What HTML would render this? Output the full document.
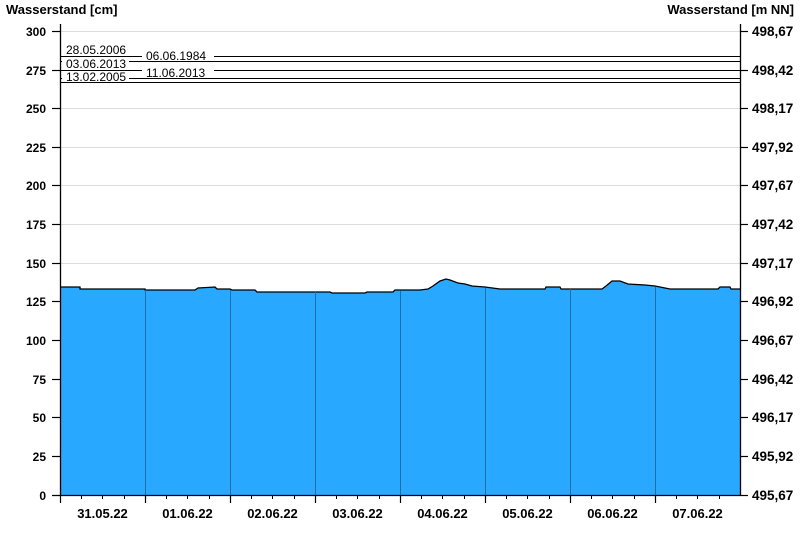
<!DOCTYPE html>
<html><head><meta charset="utf-8"><style>
html,body{margin:0;padding:0;background:#fff;}
svg{display:block;font-family:"Liberation Sans",Arial,sans-serif;}
.b{font-weight:bold;font-size:12px;fill:#000;}
.t{font-weight:bold;font-size:13px;fill:#000;}
.r{font-weight:bold;font-size:13.5px;fill:#000;}
.s{font-size:12px;fill:#000;}
</style></head><body>
<svg width="800" height="550" viewBox="0 0 800 550" xmlns="http://www.w3.org/2000/svg">
<rect width="800" height="550" fill="#fff"/>
<text x="6" y="14" class="t">Wasserstand [cm]</text>
<text x="794" y="14" class="t" text-anchor="end">Wasserstand [m NN]</text>
<g stroke="#dcdcdc" stroke-width="1">
<line x1="60" x2="740" y1="31.5" y2="31.5"/>
<line x1="60" x2="740" y1="108.5" y2="108.5"/>
<line x1="60" x2="740" y1="147.5" y2="147.5"/>
<line x1="60" x2="740" y1="185.5" y2="185.5"/>
<line x1="60" x2="740" y1="224.5" y2="224.5"/>
<line x1="60" x2="740" y1="263.5" y2="263.5"/>
</g>
<polygon fill="#29a8ff" stroke="none" points="60,495 60,287 80,287 80,289 145,289 145,290 195,290 198,288 215,287 217,289 230,289 232,290 255,290 257,292 330,292 332,293 365,293 367,292 393,292 395,290 420,290 428,289 433,286 440,281 446,279 450,280 458,283 465,284 472,286 485,287 500,289 545,289 546,287 560,287 561,289 602,289 606,286 612,281 620,281 628,284 645,285 655,286 670,289 718,289 720,287 730,287 731,289 740,289 740,495"/>
<polyline fill="none" stroke="#000" stroke-width="1.3" points="60,287 80,287 80,289 145,289 145,290 195,290 198,288 215,287 217,289 230,289 232,290 255,290 257,292 330,292 332,293 365,293 367,292 393,292 395,290 420,290 428,289 433,286 440,281 446,279 450,280 458,283 465,284 472,286 485,287 500,289 545,289 546,287 560,287 561,289 602,289 606,286 612,281 620,281 628,284 645,285 655,286 670,289 718,289 720,287 730,287 731,289 740,289"/>
<g stroke="#1d6fa8" stroke-width="1">
<line x1="145.5" x2="145.5" y1="290" y2="495"/>
<line x1="230.5" x2="230.5" y1="290" y2="495"/>
<line x1="315.5" x2="315.5" y1="292" y2="495"/>
<line x1="400.5" x2="400.5" y1="291" y2="495"/>
<line x1="485.5" x2="485.5" y1="288" y2="495"/>
<line x1="570.5" x2="570.5" y1="289" y2="495"/>
<line x1="655.5" x2="655.5" y1="287" y2="495"/>
</g>
<g stroke="#000" stroke-width="1">
<line x1="60" x2="740" y1="56.5" y2="56.5"/>
<line x1="60" x2="740" y1="61.5" y2="61.5"/>
<line x1="60" x2="740" y1="70.5" y2="70.5"/>
<line x1="60" x2="740" y1="78.5" y2="78.5"/>
<line x1="60" x2="740" y1="82.5" y2="82.5"/>
</g>
<rect x="62" y="43" width="67" height="13" fill="#fff"/>
<text x="66" y="54" class="s">28.05.2006</text>
<rect x="142" y="48" width="72" height="13" fill="#fff"/>
<text x="146" y="60" class="s">06.06.1984</text>
<rect x="62" y="57.5" width="67" height="12.5" fill="#fff"/>
<text x="66" y="68" class="s">03.06.2013</text>
<rect x="142" y="65" width="72" height="13" fill="#fff"/>
<text x="146" y="77" class="s">11.06.2013</text>
<rect x="62" y="71.5" width="67" height="10.5" fill="#fff"/>
<text x="66" y="81" class="s">13.02.2005</text>
<g stroke="#000" stroke-width="1.3" fill="none">
<line x1="60.5" x2="60.5" y1="24" y2="495"/>
<line x1="740.5" x2="740.5" y1="24" y2="495"/>
<line x1="52" x2="740" y1="495.5" y2="495.5"/>
</g>
<g stroke="#000" stroke-width="1.2">
<line x1="52" x2="60" y1="31.5" y2="31.5"/><line x1="52" x2="60" y1="70.5" y2="70.5"/><line x1="52" x2="60" y1="108.5" y2="108.5"/><line x1="52" x2="60" y1="147.5" y2="147.5"/><line x1="52" x2="60" y1="185.5" y2="185.5"/><line x1="52" x2="60" y1="224.5" y2="224.5"/><line x1="52" x2="60" y1="263.5" y2="263.5"/><line x1="52" x2="60" y1="301.5" y2="301.5"/><line x1="52" x2="60" y1="340.5" y2="340.5"/><line x1="52" x2="60" y1="379.5" y2="379.5"/><line x1="52" x2="60" y1="417.5" y2="417.5"/><line x1="52" x2="60" y1="456.5" y2="456.5"/>
<line x1="740" x2="748" y1="31.5" y2="31.5"/><line x1="740" x2="748" y1="70.5" y2="70.5"/><line x1="740" x2="748" y1="108.5" y2="108.5"/><line x1="740" x2="748" y1="147.5" y2="147.5"/><line x1="740" x2="748" y1="185.5" y2="185.5"/><line x1="740" x2="748" y1="224.5" y2="224.5"/><line x1="740" x2="748" y1="263.5" y2="263.5"/><line x1="740" x2="748" y1="301.5" y2="301.5"/><line x1="740" x2="748" y1="340.5" y2="340.5"/><line x1="740" x2="748" y1="379.5" y2="379.5"/><line x1="740" x2="748" y1="417.5" y2="417.5"/><line x1="740" x2="748" y1="456.5" y2="456.5"/><line x1="740" x2="748" y1="495.5" y2="495.5"/>
<line x1="60.5" x2="60.5" y1="495" y2="503"/><line x1="145.5" x2="145.5" y1="495" y2="503"/><line x1="230.5" x2="230.5" y1="495" y2="503"/><line x1="315.5" x2="315.5" y1="495" y2="503"/><line x1="400.5" x2="400.5" y1="495" y2="503"/><line x1="485.5" x2="485.5" y1="495" y2="503"/><line x1="570.5" x2="570.5" y1="495" y2="503"/><line x1="655.5" x2="655.5" y1="495" y2="503"/>
</g>
<g stroke="#000" stroke-width="1">
<line x1="81.5" x2="81.5" y1="495" y2="499"/><line x1="102.5" x2="102.5" y1="495" y2="499"/><line x1="124.5" x2="124.5" y1="495" y2="499"/>
<line x1="166.5" x2="166.5" y1="495" y2="499"/><line x1="187.5" x2="187.5" y1="495" y2="499"/><line x1="209.5" x2="209.5" y1="495" y2="499"/>
<line x1="251.5" x2="251.5" y1="495" y2="499"/><line x1="272.5" x2="272.5" y1="495" y2="499"/><line x1="294.5" x2="294.5" y1="495" y2="499"/>
<line x1="336.5" x2="336.5" y1="495" y2="499"/><line x1="357.5" x2="357.5" y1="495" y2="499"/><line x1="379.5" x2="379.5" y1="495" y2="499"/>
<line x1="421.5" x2="421.5" y1="495" y2="499"/><line x1="442.5" x2="442.5" y1="495" y2="499"/><line x1="464.5" x2="464.5" y1="495" y2="499"/>
<line x1="506.5" x2="506.5" y1="495" y2="499"/><line x1="527.5" x2="527.5" y1="495" y2="499"/><line x1="549.5" x2="549.5" y1="495" y2="499"/>
<line x1="591.5" x2="591.5" y1="495" y2="499"/><line x1="612.5" x2="612.5" y1="495" y2="499"/><line x1="634.5" x2="634.5" y1="495" y2="499"/>
<line x1="676.5" x2="676.5" y1="495" y2="499"/><line x1="697.5" x2="697.5" y1="495" y2="499"/><line x1="719.5" x2="719.5" y1="495" y2="499"/>
</g>
<g>
<text x="46" y="36" class="b" text-anchor="end">300</text>
<text x="46" y="75" class="b" text-anchor="end">275</text>
<text x="46" y="113" class="b" text-anchor="end">250</text>
<text x="46" y="152" class="b" text-anchor="end">225</text>
<text x="46" y="190" class="b" text-anchor="end">200</text>
<text x="46" y="229" class="b" text-anchor="end">175</text>
<text x="46" y="268" class="b" text-anchor="end">150</text>
<text x="46" y="306" class="b" text-anchor="end">125</text>
<text x="46" y="345" class="b" text-anchor="end">100</text>
<text x="46" y="384" class="b" text-anchor="end">75</text>
<text x="46" y="422" class="b" text-anchor="end">50</text>
<text x="46" y="461" class="b" text-anchor="end">25</text>
<text x="46" y="500" class="b" text-anchor="end">0</text>
</g>
<g>
<text x="752" y="36" class="r">498,67</text>
<text x="752" y="75" class="r">498,42</text>
<text x="752" y="113" class="r">498,17</text>
<text x="752" y="152" class="r">497,92</text>
<text x="752" y="190" class="r">497,67</text>
<text x="752" y="229" class="r">497,42</text>
<text x="752" y="268" class="r">497,17</text>
<text x="752" y="306" class="r">496,92</text>
<text x="752" y="345" class="r">496,67</text>
<text x="752" y="384" class="r">496,42</text>
<text x="752" y="422" class="r">496,17</text>
<text x="752" y="461" class="r">495,92</text>
<text x="752" y="500" class="r">495,67</text>
</g>
<g>
<text x="102.5" y="518" class="t" text-anchor="middle">31.05.22</text>
<text x="187.5" y="518" class="t" text-anchor="middle">01.06.22</text>
<text x="272.5" y="518" class="t" text-anchor="middle">02.06.22</text>
<text x="357.5" y="518" class="t" text-anchor="middle">03.06.22</text>
<text x="442.5" y="518" class="t" text-anchor="middle">04.06.22</text>
<text x="527.5" y="518" class="t" text-anchor="middle">05.06.22</text>
<text x="612.5" y="518" class="t" text-anchor="middle">06.06.22</text>
<text x="697.5" y="518" class="t" text-anchor="middle">07.06.22</text>
</g>
</svg>
</body></html>
